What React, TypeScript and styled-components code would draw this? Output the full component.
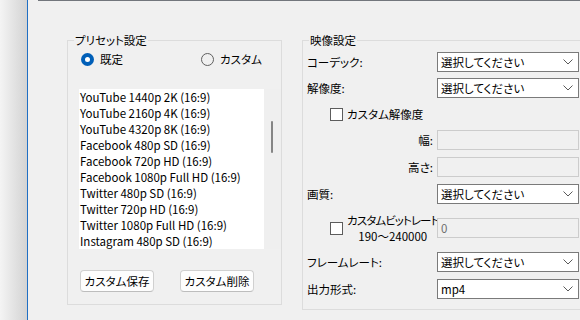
import React from "react";
import styled, { createGlobalStyle } from "styled-components";

const Global = createGlobalStyle`
  html, body {
    margin: 0;
    padding: 0;
    width: 580px;
    height: 320px;
    overflow: hidden;
    background: #f0f0f0;
  }
  body {
    font-family: "Noto Sans CJK JP", "Noto Sans", sans-serif;
    font-size: 11.5px;
    font-feature-settings: "palt";
    color: #000;
  }
`;

const Screen = styled.div`
  display: flex;
  width: 580px;
  height: 320px;
`;

const Shadow = styled.div`
  flex: none;
  width: 27px;
  background: linear-gradient(to right, #f4f4f4, #d3d3d3);
  border-right: 1px solid #1f6fc4;
`;

const Window = styled.div`
  flex: 1;
  min-width: 0;
  display: flex;
  flex-direction: column;
`;

const TopEdge = styled.div`
  flex: none;
  height: 1px;
  margin-left: 10px;
  background: #72767c;
`;

const Panels = styled.div`
  display: flex;
  align-items: flex-start;
  gap: 20px;
  margin-top: 32px;
  padding-left: 39px;
`;

const Group = styled.fieldset<{ $w: number }>`
  flex: none;
  box-sizing: border-box;
  width: ${(p) => p.$w}px;
  margin: 0;
  padding: 0;
  border: 1px solid #dcdcdc;
  min-width: 0;
`;

const GroupBody = styled.div<{ $pl: number; $pt: number; $pb: number }>`
  padding: ${(p) => p.$pt}px 0 ${(p) => p.$pb}px ${(p) => p.$pl}px;
`;

const Legend = styled.legend`
  margin-left: 6px;
  padding: 0 1px;
  line-height: 14px;
`;

const RadioRow = styled.div`
  display: grid;
  grid-template-columns: 120px auto;
  padding-left: 2px;
  height: 16px;
  align-items: center;
`;

const RadioItem = styled.label`
  display: flex;
  align-items: center;
  gap: 6px;
  line-height: 16px;
`;

const RadioDot = styled.span<{ $checked?: boolean }>`
  box-sizing: border-box;
  width: 13px;
  height: 13px;
  border-radius: 50%;
  border: ${(p) => (p.$checked ? "none" : "1px solid #5f5f5f")};
  background: ${(p) => (p.$checked ? "#005fb8" : "transparent")};
  display: flex;
  align-items: center;
  justify-content: center;
  &::after {
    content: "";
    display: ${(p) => (p.$checked ? "block" : "none")};
    width: 5px;
    height: 5px;
    border-radius: 50%;
    background: #fff;
  }
`;

const ListBox = styled.div`
  display: flex;
  height: 160px;
  margin-top: 22px;
`;

const ListItems = styled.div`
  width: 185px;
  background: #fff;
  overflow: hidden;
`;

const ListItem = styled.div`
  height: 16px;
  line-height: 16px;
  padding-left: 1px;
  white-space: nowrap;
`;

const ScrollTrack = styled.div`
  width: 17px;
  box-sizing: border-box;
  padding: 32px 0 0 7px;
  background: #efefef;
`;

const ScrollThumb = styled.div`
  width: 2px;
  height: 32px;
  border-radius: 1px;
  background: #858585;
`;

const ButtonRow = styled.div`
  display: grid;
  grid-template-columns: 100px 100px;
  padding-left: 1px;
  margin-top: 21px;
`;

const Button = styled.button`
  box-sizing: border-box;
  width: 74px;
  height: 22px;
  padding: 0;
  border: 1px solid #d0d0d0;
  border-bottom-color: #bdbdbd;
  border-radius: 4px;
  background: #fdfdfd;
  font: inherit;
  color: #000;
  line-height: 20px;
`;

const Row = styled.div<{ $mt: number }>`
  display: flex;
  align-items: center;
  margin-top: ${(p) => p.$mt}px;
`;

const Label = styled.div<{ $right?: boolean }>`
  flex: none;
  width: 130px;
  box-sizing: border-box;
  padding-right: ${(p) => (p.$right ? "4px" : "0")};
  text-align: ${(p) => (p.$right ? "right" : "left")};
  line-height: 16px;
  white-space: nowrap;
`;

const CheckCell = styled.div`
  flex: none;
  width: 130px;
  box-sizing: border-box;
  padding-left: 23px;
  display: flex;
  align-items: center;
  gap: 4px;
`;

const CheckBox = styled.span`
  flex: none;
  box-sizing: border-box;
  width: 13px;
  height: 13px;
  border: 1px solid #5c5c5c;
  background: #fff;
`;

const CheckText = styled.span`
  line-height: 16px;
  white-space: nowrap;
`;

const TwoLine = styled.div`
  display: flex;
  flex-direction: column;
  align-items: center;
  line-height: 16px;
  white-space: nowrap;
`;

const TightLine = styled.span`
  letter-spacing: -0.9px;
`;

const Select = styled.div`
  flex: none;
  box-sizing: border-box;
  width: 142px;
  height: 20px;
  border: 1px solid #7a7a7a;
  background: #fff;
  display: flex;
  align-items: center;
  justify-content: space-between;
  padding: 0 5px 0 3px;
  line-height: 18px;
`;

const TextInput = styled.div`
  flex: none;
  box-sizing: border-box;
  width: 142px;
  height: 20px;
  border: 1px solid #cccccc;
  background: #f0f0f0;
  padding-left: 3px;
  line-height: 18px;
  color: #6d6d6d;
`;

const Chevron = () => (
  <svg width="10" height="6" viewBox="0 0 10 6">
    <polyline points="0.5,0.5 5,5 9.5,0.5" fill="none" stroke="#5a5a5a" strokeWidth="1" />
  </svg>
);

const presets = [
  "YouTube 1440p 2K (16:9)",
  "YouTube 2160p 4K (16:9)",
  "YouTube 4320p 8K (16:9)",
  "Facebook 480p SD (16:9)",
  "Facebook 720p HD (16:9)",
  "Facebook 1080p Full HD (16:9)",
  "Twitter 480p SD (16:9)",
  "Twitter 720p HD (16:9)",
  "Twitter 1080p Full HD (16:9)",
  "Instagram 480p SD (16:9)",
];

const SelectBox = ({ value }: { value: string }) => (
  <Select>
    <span>{value}</span>
    <Chevron />
  </Select>
);

export default function App() {
  return (
    <>
      <Global />
      <Screen>
        <Shadow />
        <Window>
          <TopEdge />
          <Panels>
            <Group $w={215}>
              <Legend>プリセット設定</Legend>
              <GroupBody $pl={11} $pt={4} $pb={12}>
                <RadioRow>
                  <RadioItem>
                    <RadioDot $checked />
                    既定
                  </RadioItem>
                  <RadioItem>
                    <RadioDot />
                    カスタム
                  </RadioItem>
                </RadioRow>
                <ListBox>
                  <ListItems>
                    {presets.map((p) => (
                      <ListItem key={p}>{p}</ListItem>
                    ))}
                  </ListItems>
                  <ScrollTrack>
                    <ScrollThumb />
                  </ScrollTrack>
                </ListBox>
                <ButtonRow>
                  <Button>カスタム保存</Button>
                  <Button>カスタム削除</Button>
                </ButtonRow>
              </GroupBody>
            </Group>
            <Group $w={300}>
              <Legend>映像設定</Legend>
              <GroupBody $pl={4} $pt={5} $pb={10}>
                <Row $mt={0}>
                  <Label>コーデック:</Label>
                  <SelectBox value="選択してください" />
                </Row>
                <Row $mt={6}>
                  <Label>解像度:</Label>
                  <SelectBox value="選択してください" />
                </Row>
                <Row $mt={8}>
                  <CheckCell>
                    <CheckBox />
                    <CheckText>カスタム解像度</CheckText>
                  </CheckCell>
                </Row>
                <Row $mt={8}>
                  <Label $right>幅:</Label>
                  <TextInput />
                </Row>
                <Row $mt={7}>
                  <Label $right>高さ:</Label>
                  <TextInput />
                </Row>
                <Row $mt={7}>
                  <Label>画質:</Label>
                  <SelectBox value="選択してください" />
                </Row>
                <Row $mt={8}>
                  <CheckCell>
                    <CheckBox />
                    <TwoLine>
                      <TightLine>カスタムビットレート</TightLine>
                      <span>190〜240000</span>
                    </TwoLine>
                  </CheckCell>
                  <TextInput>0</TextInput>
                </Row>
                <Row $mt={8}>
                  <Label>フレームレート:</Label>
                  <SelectBox value="選択してください" />
                </Row>
                <Row $mt={7}>
                  <Label>出力形式:</Label>
                  <SelectBox value="mp4" />
                </Row>
              </GroupBody>
            </Group>
          </Panels>
        </Window>
      </Screen>
    </>
  );
}
